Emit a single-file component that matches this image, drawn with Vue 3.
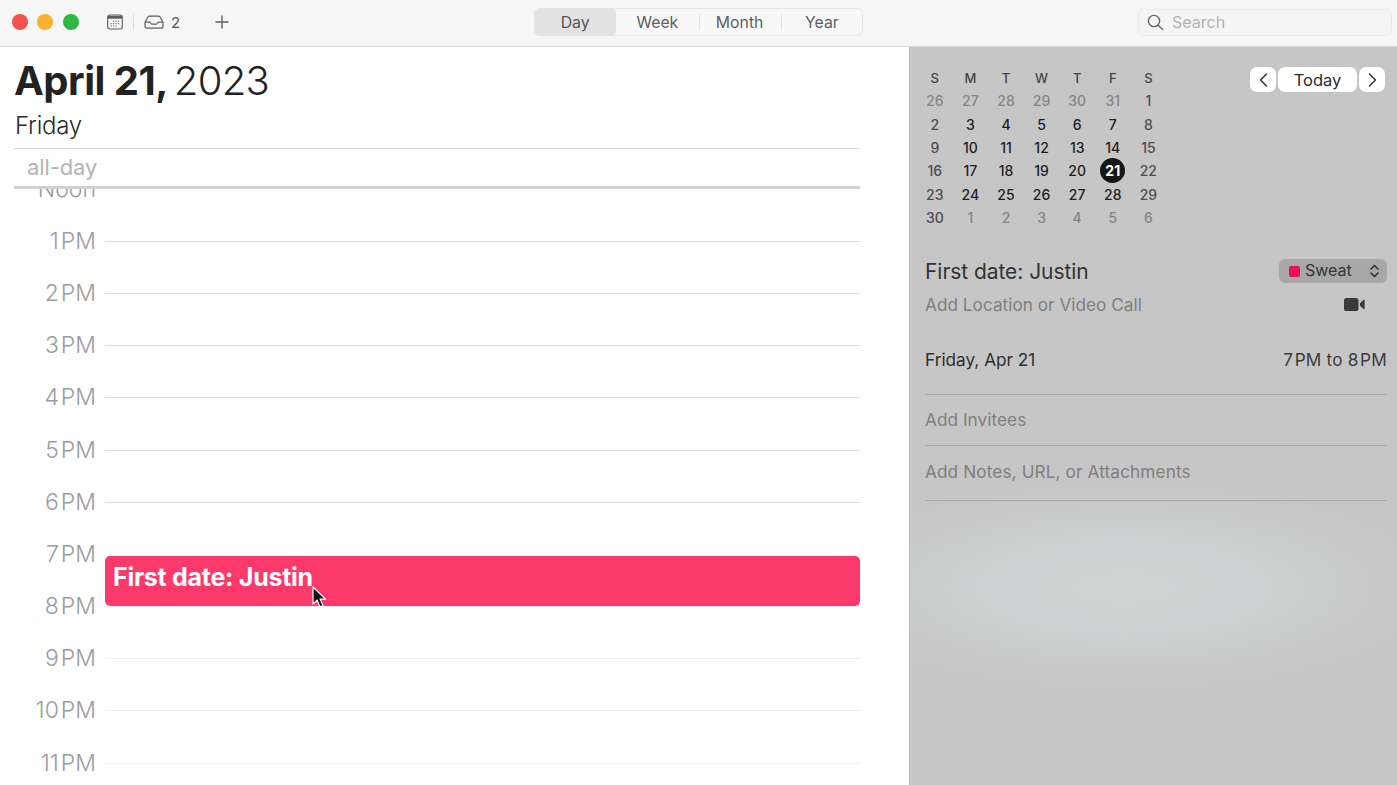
<script setup>
const tabs = ['Day', 'Week', 'Month', 'Year']
const hours = [
  ['Noon', ''], ['1', 'PM'], ['2', 'PM'], ['3', 'PM'], ['4', 'PM'], ['5', 'PM'], ['6', 'PM'],
  ['7', 'PM'], ['8', 'PM'], ['9', 'PM'], ['10', 'PM'], ['11', 'PM']
]
const heads = ['S', 'M', 'T', 'W', 'T', 'F', 'S']
const rows = [
  [[26,'o'],[27,'o'],[28,'o'],[29,'o'],[30,'o'],[31,'o'],[1,'w']],
  [[2,'w'],[3,'d'],[4,'d'],[5,'d'],[6,'d'],[7,'d'],[8,'w']],
  [[9,'w'],[10,'d'],[11,'d'],[12,'d'],[13,'d'],[14,'d'],[15,'w']],
  [[16,'w'],[17,'d'],[18,'d'],[19,'d'],[20,'d'],[21,'t'],[22,'w']],
  [[23,'w'],[24,'d'],[25,'d'],[26,'d'],[27,'d'],[28,'d'],[29,'w']],
  [[30,'w'],[1,'o'],[2,'o'],[3,'o'],[4,'o'],[5,'o'],[6,'o']]
]
const days = rows.flat()
</script>

<template>
  <div class="app">
    <header class="toolbar">
      <div class="tb-left">
        <span class="light red"></span>
        <span class="light yellow"></span>
        <span class="light green"></span>
        <svg class="ic-cal" width="16" height="16" viewBox="0 0 16 16" fill="none">
          <rect x="0.7" y="1" width="14.6" height="14" rx="2.2" stroke="#5c5c5c" stroke-width="1.1" />
          <path d="M1 1.8h14v2.9H1z" fill="#5c5c5c" />
          <g fill="#777">
            <rect x="6" y="6.6" width="1.2" height="1.2" /><rect x="8.4" y="6.6" width="1.2" height="1.2" /><rect x="10.8" y="6.6" width="1.2" height="1.2" />
            <rect x="3.6" y="9" width="1.2" height="1.2" /><rect x="6" y="9" width="1.2" height="1.2" /><rect x="8.4" y="9" width="1.2" height="1.2" /><rect x="10.8" y="9" width="1.2" height="1.2" />
            <rect x="3.6" y="11.4" width="1.2" height="1.2" /><rect x="6" y="11.4" width="1.2" height="1.2" /><rect x="8.4" y="11.4" width="1.2" height="1.2" />
          </g>
        </svg>
        <span class="tb-sep"></span>
        <svg class="ic-inbox" width="20" height="14" viewBox="0 0 20 14" fill="none" stroke="#5f5f5f" stroke-width="1.2" stroke-linejoin="round">
          <path d="M1 7.2 4 2a1.8 1.8 0 0 1 1.5-.9h9A1.8 1.8 0 0 1 16 2l3 5.2v4a2 2 0 0 1-2 2H3a2 2 0 0 1-2-2z" />
          <path d="M1 7.2h4.6c.8 0 1 2 2.2 2h4.4c1.2 0 1.4-2 2.2-2H19" />
        </svg>
        <span class="count">2</span>
        <svg class="ic-plus" width="14" height="14" viewBox="0 0 14 14" stroke="#5f5f5f" stroke-width="1.4">
          <path d="M7 .5v13M.5 7h13" />
        </svg>
      </div>
      <nav class="tabs">
        <span v-for="(t, i) in tabs" :key="t" class="tab" :class="{ active: i === 0, sep: i > 1 }">{{ t }}</span>
      </nav>
      <div class="search">
        <svg width="17" height="17" viewBox="0 0 17 17" fill="none" stroke="#666" stroke-width="1.4" stroke-linecap="round">
          <circle cx="7" cy="7" r="5.6" />
          <path d="m11.2 11.2 4.4 4.4" />
        </svg>
        <span>Search</span>
      </div>
    </header>

    <main class="body">
      <section class="day">
        <h1 class="date"><b>April 21,</b> 2023</h1>
        <div class="weekday">Friday</div>
        <div class="allday">all-day</div>
        <div class="timeline">
          <div class="hours">
            <div v-for="(h, i) in hours" :key="i" class="hour">
              <span class="hlabel">{{ h[0] }}<i v-if="h[1]" class="pm">{{ h[1] }}</i></span>
              <span class="hline" :class="{ faint: i > 7, none: i === 7 || i === 0 }"></span>
            </div>
          </div>
          <div class="event">First date: Justin</div>
          <svg class="cursor" width="16" height="23" viewBox="0 0 16 23">
            <path d="M1 1v17l4.2-3.8 2.7 6.6 3-1.3-2.8-6.4h5.6z" fill="#111" stroke="#fff" stroke-width="1.2" stroke-linejoin="round" />
          </svg>
        </div>
      </section>

      <aside class="side">
        <div class="cal-top">
          <div class="mini">
            <span v-for="(h, i) in heads" :key="'h' + i" class="cell head">{{ h }}</span>
            <span v-for="(d, i) in days" :key="i" class="cell" :class="d[1]">
              <em v-if="d[1] === 't'">{{ d[0] }}</em>
              <template v-else>{{ d[0] }}</template>
            </span>
          </div>
          <div class="nav">
            <span class="btn arrow">
              <svg width="9" height="14" viewBox="0 0 9 14" fill="none" stroke="#333" stroke-width="1.5" stroke-linecap="round" stroke-linejoin="round"><path d="M7.5 1 1.5 7l6 6" /></svg>
            </span>
            <span class="btn today">Today</span>
            <span class="btn arrow">
              <svg width="9" height="14" viewBox="0 0 9 14" fill="none" stroke="#333" stroke-width="1.5" stroke-linecap="round" stroke-linejoin="round"><path d="m1.5 1 6 6-6 6" /></svg>
            </span>
          </div>
        </div>

        <div class="detail">
          <div class="title-row">
            <span class="ev-title">First date: Justin</span>
            <span class="chip">
              <i class="swatch"></i>
              <span>Sweat</span>
              <svg width="9" height="14" viewBox="0 0 9 14" fill="none" stroke="#333" stroke-width="1.6" stroke-linecap="round" stroke-linejoin="round"><path d="m1 5 3.5-3.5L8 5M1 9l3.5 3.5L8 9" /></svg>
            </span>
          </div>
          <div class="loc-row">
            <span class="muted">Add Location or Video Call</span>
            <svg class="video" width="21" height="13" viewBox="0 0 21 13" fill="#3a3a3c">
              <rect width="14.5" height="13" rx="2.6" />
              <path d="M16 5.2 19.4 2c.6-.5 1.2-.2 1.2.5v8c0 .7-.6 1-1.2.5L16 7.8z" />
            </svg>
          </div>
          <div class="time-row">
            <span>Friday, Apr 21</span>
            <span class="range">7<i class="pm">PM</i> to 8<i class="pm">PM</i></span>
          </div>
          <div class="line-row invitees muted">Add Invitees</div>
          <div class="line-row notes muted">Add Notes, URL, or Attachments</div>
        </div>
      </aside>
    </main>
  </div>
</template>

<style>
html, body { margin: 0; background: #fff; overflow: hidden; }
</style>

<style scoped>
.app {
  width: 1397px;
  height: 785px;
  display: flex;
  flex-direction: column;
  overflow: hidden;
  font-family: Inter, "Liberation Sans", sans-serif;
  color: #222;
}
.toolbar {
  height: 47px;
  flex: none;
  box-sizing: border-box;
  padding-bottom: 2px;
  border-bottom: 1px solid #dcdcdc;
  background: #f6f6f6;
  display: flex;
  align-items: center;
}
.tb-left {
  display: flex;
  align-items: center;
  padding-left: 11.5px;
  width: 534px;
  box-sizing: border-box;
  flex: none;
}
.light { width: 16px; height: 16px; border-radius: 50%; margin-right: 9.5px; flex: none; }
.red { background: #f0524f; }
.yellow { background: #f6b12f; }
.green { background: #2cb842; }
.ic-cal { margin-left: 19px; }
.tb-sep { width: 1px; height: 16px; background: #e0e0e0; margin: 0 10px; }
.count { font-size: 15px; color: #555; margin-left: 7px; }
.ic-plus { margin-left: 35px; }
.tabs {
  width: 329px;
  height: 28px;
  box-sizing: border-box;
  box-shadow: inset 0 0 0 1px #e6e6e6;
  border-radius: 6px;
  display: flex;
  background: #f8f8f8;
  flex: none;
  overflow: hidden;
}
.tab {
  flex: 1;
  display: flex;
  align-items: center;
  justify-content: center;
  font-size: 15.8px;
  color: #5e5e5e;
  position: relative;
}
.tab.active { background: #e2e2e2; color: #555; border-radius: 5px; }
.tab.sep::before {
  content: "";
  position: absolute;
  left: 0;
  top: 6px;
  bottom: 6px;
  width: 1px;
  background: #e2e2e2;
}
.search {
  margin-left: 275px;
  width: 254px;
  height: 27px;
  box-sizing: border-box;
  border: 1px solid #ebebeb;
  border-radius: 6px;
  background: #f5f5f5;
  display: flex;
  align-items: center;
  gap: 8px;
  padding-left: 8px;
  font-size: 16px;
  color: #b2b2b2;
  flex: none;
}
.body { flex: 1; display: flex; min-height: 0; }
.day {
  width: 909px;
  flex: none;
  background: #fff;
  display: flex;
  flex-direction: column;
  min-height: 0;
}
.date {
  margin: 11px 0 0 14px;
  font-size: 40px;
  line-height: 46px;
  font-weight: 300;
  color: #222;
  letter-spacing: -0.65px;
  white-space: nowrap;
  word-spacing: -5px;
}
.date b { font-weight: 700; letter-spacing: -0.5px; word-spacing: 0; }
.weekday {
  margin: 8px 0 0 15px;
  font-size: 24px;
  line-height: 28px;
  font-weight: 300;
  color: #2a2a2a;
  letter-spacing: -0.25px;
}
.allday {
  margin: 8px 49px 0 14px;
  height: 37px;
  border-top: 1px solid #d8d8d8;
  border-bottom: 3px solid #d0d0d0;
  padding-left: 13px;
  font-size: 22px;
  line-height: 37px;
  color: #b4b4b4;
  font-weight: 400;
  letter-spacing: -0.1px;
}
.timeline { position: relative; flex: 1; min-height: 0; overflow: hidden; }
.hours { margin-top: -26px; }
.hour { height: 52.2px; display: flex; align-items: center; }
.hlabel {
  width: 96px;
  flex: none;
  text-align: right;
  font-size: 23px;
  line-height: 26px;
  padding-bottom: 1px;
  font-weight: 300;
  color: #9c9c9c;
  white-space: nowrap;
}
.hlabel .pm { font-style: normal; margin-left: 2px; }
.hline { margin-left: 9px; width: 755px; height: 1px; background: #dcdcdc; flex: none; }
.hline.faint { background: #eeeeee; }
.hline.none { background: transparent; }
.event {
  position: absolute;
  left: 105px;
  top: 367px;
  width: 755px;
  height: 50px;
  box-sizing: border-box;
  background: #fb3a6b;
  border-radius: 5px;
  color: #fff;
  font-size: 25px;
  line-height: 28px;
  font-weight: 700;
  padding: 7px 0 0 8px;
  letter-spacing: -0.27px;
}
.cursor { position: absolute; left: 312px; top: 397px; }
.side {
  flex: 1;
  min-width: 0;
  box-sizing: border-box;
  border-left: 1px solid #b8b8b8;
  padding: 0 10px 0 7px;
  background:
    radial-gradient(ellipse 320px 105px at 215px 540px, #d2d4d4 0%, #cfd1d2 35%, rgba(200, 202, 203, 0) 100%),
    #c6c6c6;
}
.cal-top { display: flex; justify-content: space-between; padding-top: 19px; }
.mini {
  display: grid;
  grid-template-columns: repeat(7, 35.6px);
  grid-auto-rows: 23.3px;
  font-size: 14px;
  font-weight: 500;
}
.cell { display: flex; align-items: center; justify-content: center; }
.cell.head { color: #444; font-size: 13px; }
.cell.o { color: #858585; }
.cell.w { color: #4e4e4e; }
.cell.d { color: #1e1e1e; }
.cell.t em {
  font-style: normal;
  width: 25px;
  height: 25px;
  border-radius: 50%;
  background: #161616;
  color: #fff;
  font-weight: 700;
  display: flex;
  align-items: center;
  justify-content: center;
}
.nav { display: flex; gap: 2px; height: 25px; margin: 1px 2px 0 0; }
.btn {
  background: #fff;
  border-radius: 7px;
  display: flex;
  align-items: center;
  justify-content: center;
  color: #2a2a2a;
  font-size: 16.5px;
}
.arrow { width: 26px; }
.today { width: 79px; }
.detail { margin-left: 8px; margin-top: 30px; }
.title-row {
  display: flex;
  justify-content: space-between;
  align-items: center;
  height: 24px;
}
.ev-title { font-size: 21px; font-weight: 400; color: #333; letter-spacing: -0.05px; }
.chip {
  width: 108px;
  height: 24px;
  box-sizing: border-box;
  background: #a8a8a8;
  border-radius: 6px;
  display: flex;
  align-items: center;
  padding: 0 8px 0 10px;
  font-size: 16px;
  color: #333;
}
.chip span { margin-left: 5px; flex: 1; padding-bottom: 2px; }
.swatch { width: 11px; height: 11px; border-radius: 2px; background: #ea0f5c; flex: none; }
.muted { color: #7f7f7f; }
.loc-row {
  display: flex;
  justify-content: space-between;
  align-items: center;
  height: 24px;
  margin-top: 9px;
  font-size: 17.2px;
  letter-spacing: 0.02px;
}
.video { margin-right: 22px; }
.time-row {
  display: flex;
  justify-content: space-between;
  align-items: center;
  height: 24px;
  margin-top: 31px;
  font-size: 17.2px;
  color: #2e2e2e;
}
.range { color: #3c3c3c; letter-spacing: 0.2px; }
.range .pm { font-style: normal; margin-left: 1.5px; }
.line-row { font-size: 17.2px; border-top: 1px solid #a9a9a9; letter-spacing: 0.05px; }
.invitees { margin-top: 23px; height: 51px; line-height: 49px; box-sizing: border-box; }
.notes { height: 56px; line-height: 52px; border-bottom: 1px solid #a9a9a9; box-sizing: border-box; letter-spacing: 0.12px; }
</style>
